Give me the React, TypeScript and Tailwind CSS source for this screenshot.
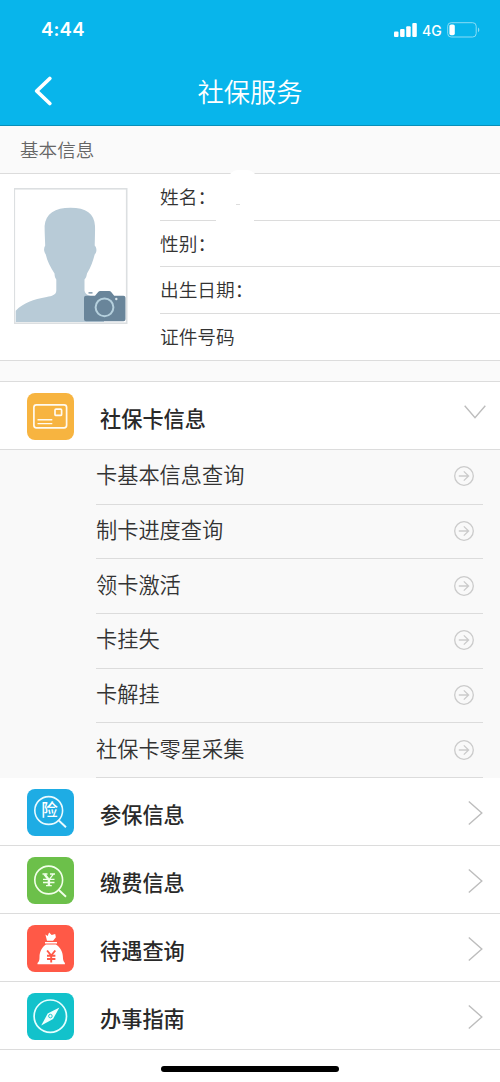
import type { ReactNode } from 'react'

const profileFields = [
  { label: '姓名', colon: true },
  { label: '性别', colon: true },
  { label: '出生日期', colon: true },
  { label: '证件号码', colon: false },
]

const cardServices = ['卡基本信息查询', '制卡进度查询', '领卡激活', '卡挂失', '卡解挂', '社保卡零星采集']

const menuItems = [
  { label: '参保信息', icon: <InsuranceIcon />, color: 'bg-[#1eace4]' },
  { label: '缴费信息', icon: <PaymentIcon />, color: 'bg-[#6cc04a]' },
  { label: '待遇查询', icon: <MoneyBagIcon />, color: 'bg-[#ff5947]' },
  { label: '办事指南', icon: <CompassIcon />, color: 'bg-[#12c2cb]' },
]

function CardIcon() {
  return (
    <svg viewBox="0 0 47 47" className="size-full" fill="none" stroke="#fffaf0" strokeWidth="1.7">
      <rect x="6.9" y="11.8" width="32.7" height="23" rx="2.5" />
      <rect x="28" y="16.2" width="6.6" height="6.2" rx="1" />
      <path d="M10.5 26.7h14.8M10.5 30.6h14.8" strokeWidth="1.4" />
    </svg>
  )
}

function InsuranceIcon() {
  return (
    <svg viewBox="0 0 47 47" className="size-full" fill="none" stroke="#e9faff">
      <circle cx="21.7" cy="21.5" r="13.9" strokeWidth="1.6" />
      <path d="M31.8 31.5l7.2 6.7" strokeWidth="1.9" />
      <text x="22.4" y="27" textAnchor="middle" fontSize="16.5" fontWeight="500" fill="#fff" stroke="none">险</text>
    </svg>
  )
}

function PaymentIcon() {
  return (
    <svg viewBox="0 0 47 47" className="size-full" fill="none" stroke="#f1ffe9">
      <circle cx="21.7" cy="23" r="13.9" strokeWidth="1.6" />
      <path d="M31.8 33l7.2 6.7" strokeWidth="1.9" />
      <path d="M15.5 17h5M23 17h5M26.2 17.3l-4.3 5.5M16 22.3h11.5M16 25.5h11.5M19 28.7h5.8" strokeWidth="1.3" />
      <path d="M17.5 17.3l4.4 5.5v6" strokeWidth="2.4" />
    </svg>
  )
}

function MoneyBagIcon() {
  return (
    <svg viewBox="0 0 47 47" className="size-full" fill="#fff">
      <path d="M20 15.7l-1.6-6.2 2.2 1.5 1.5-3.5 2.6 2.4 3.5-1 .7 3.4-2.8 3.4z" />
      <path d="M18 17h12v1.4H18zM19 19.5h9.9c4.2 2.5 7 7.6 7 12.2 0 2.6.5 5 2 6.2v1.4H10.5v-1.4c1.900-1.2 2-4 2-6.2 0-4.6 2.5-9.7 6.5-12.2z" />
      <path d="M20.1 25.500l4.100 5.100 4.100-5.100M24.200 30.500v7M20 30.800h8.400M20 34h8.400" fill="none" stroke="#ff5947" strokeWidth="1.900" />
    </svg>
  )
}

function CompassIcon() {
  return (
    <svg viewBox="0 0 47 47" className="size-full" fill="none">
      <circle cx="23.3" cy="23.2" r="16.2" stroke="#e5ffff" strokeWidth="1.7" />
      <path d="M32.4 14.5l-6.3 11.4L14.2 32.5l6.5-11.9z" fill="#effffe" />
      <circle cx="23.4" cy="23.1" r="1.8" fill="#effffe" stroke="#12c2cb" strokeWidth=".9" />
    </svg>
  )
}

function CircleArrow() {
  return (
    <svg viewBox="0 0 22 22" className="-mt-[1px] size-[22px]" fill="none" stroke="#cbcbcb" strokeWidth="1.3">
      <circle cx="11" cy="11" r="9.3" />
      <path d="M5.8 11h9.7M10.8 6.4l4.8 4.6-4.8 4.6" />
    </svg>
  )
}

function Avatar() {
  return (
    <svg viewBox="0 0 114 136" className="mt-[14px] ml-[14px] h-[136px] w-[114px] shrink-0">
      <rect x=".3" y=".8" width="112.4" height="134.4" fill="#fff" stroke="#dcdfe1" strokeWidth="1.6" />
      <path
        fill="#b8cbd7"
        d="M1.7 134V122.7C10 114.5 19 111.5 32.7 109C38 107.8 42 107 42.3 102.7V91.5C41.2 90 40.5 88 40.5 85.5C36.5 79 33 73 31.8 66.5C30 64 29.3 61 31.2 57.5C31 51 30.6 45 30.6 38C31.5 25.5 41 19.7 56.5 19.7C72 19.7 80.5 25.5 81 38C81.2 45 80.8 51 80.7 57.5C83 60 83 64 80.7 66.5C79 73 77 79 73 85.5C72.6 88 72 90 70.5 91.5V102.7C71 105.5 73 107 76 107.7L90 115V134Z"
      />
      <path
        fill="#69859a"
        d="M72 107.7h9l3.2-3.7a3 3 0 0 1 2-1h9a3 3 0 0 1 2 1l3 3.7h9.3a2 2 0 0 1 2 2v21.5a2 2 0 0 1-2 2H72a2 2 0 0 1-2-2v-21.5a2 2 0 0 1 2-2zM74.5 104.3h4v1.3h-4z"
      />
      <circle cx="90.5" cy="119.3" r="8.9" fill="none" stroke="#b5d0dd" strokeWidth="2" />
      <circle cx="102.3" cy="111" r="1.2" fill="#dce8ee" />
    </svg>
  )
}

function MenuRow({ label, icon, color, open }: { label: string; icon: ReactNode; color: string; open?: boolean }) {
  return (
    <div className="flex h-[68px] items-center border-b border-[#dcdcdc] bg-white pl-[26.5px]">
      <div className={`mt-[2px] size-[47px] shrink-0 overflow-hidden rounded-[8px] ${color}`}>{icon}</div>
      <div className="ml-[26.5px] mt-[5px] flex-1 text-[21.2px] leading-8 font-medium text-[#292929]">{label}</div>
      {open ? (
        <svg viewBox="0 0 22 14" className="mr-[14px] mb-[7px] h-[14px] w-[22px]" fill="none" stroke="#bdbdbd" strokeWidth="1.4">
          <path d="M.7.8L11 12.8 21.3.8" />
        </svg>
      ) : (
        <svg viewBox="0 0 15 26" className="mr-[17px] mt-[3px] h-[26px] w-[15px]" fill="none" stroke="#bdbdbd" strokeWidth="1.4">
          <path d="M.8 1.5L13.8 13 .8 24.5" />
        </svg>
      )}
    </div>
  )
}

export default function App() {
  return (
    <main
      lang="zh-CN"
      className="flex h-[1082px] w-[500px] flex-col overflow-hidden bg-white font-['Noto_Sans_CJK_SC',sans-serif] text-[#333]"
    >
      <header className="h-[126px] shrink-0 border-b border-[#078fb9] bg-[#08b5eb] text-white">
        <div className="flex h-[60px] items-center justify-between pr-[20px] pl-[41px] font-[Inter,sans-serif]">
          <span className="text-[18.5px] font-semibold tracking-[0.2px]">4:44</span>
          <div className="flex items-center">
            <svg viewBox="0 0 23 14" className="h-[14px] w-[23px]" fill="#fff">
              <rect y="8.5" width="4.5" height="5.5" rx="1" />
              <rect x="6.1" y="6" width="4.5" height="8" rx="1" />
              <rect x="12.2" y="3.3" width="4.5" height="10.7" rx="1" />
              <rect x="18.3" width="4.5" height="14" rx="1" />
            </svg>
            <span className="ml-[5px] w-[20px] text-[14px] font-medium">4G</span>
            <svg viewBox="0 0 33 16" className="ml-[5px] h-[16px] w-[33px]">
              <rect x=".7" y=".7" width="28.5" height="14.3" rx="3.5" fill="none" stroke="#8bdcf5" strokeWidth="1" />
              <rect x="2.4" y="2.4" width="5.4" height="10.9" rx="1.7" fill="#fff" />
              <path d="M31 5.5c1.8.8 1.8 4 0 4.8z" fill="#8bdcf5" />
            </svg>
          </div>
        </div>
        <div className="grid h-[62px] grid-cols-[100px_1fr_100px] items-center">
          <svg viewBox="0 0 20 32" className="ml-[33px] h-[32px] w-[20px]" fill="none" stroke="#fff" strokeWidth="3.8" strokeLinecap="round" strokeLinejoin="round">
            <path d="M16.8 3.5L3.7 16 16.8 28.5" />
          </svg>
          <h1 className="text-center text-[26.3px] font-[350]">社保服务</h1>
        </div>
      </header>

      <h2 className="h-[48px] shrink-0 border-b border-[#dcdcdc] bg-[#fafafa] pl-[20px] text-[18.6px] leading-[46px] font-[350] text-[#666]">
        基本信息
      </h2>

      <section className="relative flex h-[187px] shrink-0 border-b border-[#dcdcdc]">
        <Avatar />
        <div className="ml-[32px] flex-1">
          {profileFields.map(({ label, colon }) => (
            <div key={label} className="flex h-[46.67px] border-b border-[#dcdcdc] text-[18.7px] leading-[44px] font-[350] last:border-0">
              <span>{label}</span>
              {colon && <span>：</span>}
            </div>
          ))}
        </div>
        {/* masked name */}
        <div className="absolute -top-[4px] left-[228px] h-[30px] w-[29px] rounded-t-[10px] bg-white" />
        <div className="absolute top-[18px] left-[216px] flex h-[31px] w-[38px] justify-center bg-white">
          <span className="mt-[12px] ml-[5px] h-px w-[4px] bg-[#ddd]" />
        </div>
      </section>

      <div className="h-[21px] shrink-0 border-b border-[#dcdcdc] bg-[#fafafa]" />

      <MenuRow label="社保卡信息" icon={<CardIcon />} color="bg-[#f7b440]" open />

      <ul className="h-[328px] shrink-0 bg-[#f9f9f9] pr-[17px] pl-[96px]">
        {cardServices.map((service) => (
          <li key={service} className="flex h-[54.67px] items-center justify-between border-b border-[#dcdcdc] pr-[8px] text-[21.2px] font-[350]">
            <span className="-mt-[5px]">{service}</span>
            <CircleArrow />
          </li>
        ))}
      </ul>

      <nav className="shrink-0">
        {menuItems.map((item) => (
          <MenuRow key={item.label} {...item} />
        ))}
      </nav>

      <div className="mx-auto mt-[16px] h-[6px] w-[178px] shrink-0 rounded-full bg-black" />
    </main>
  )
}
